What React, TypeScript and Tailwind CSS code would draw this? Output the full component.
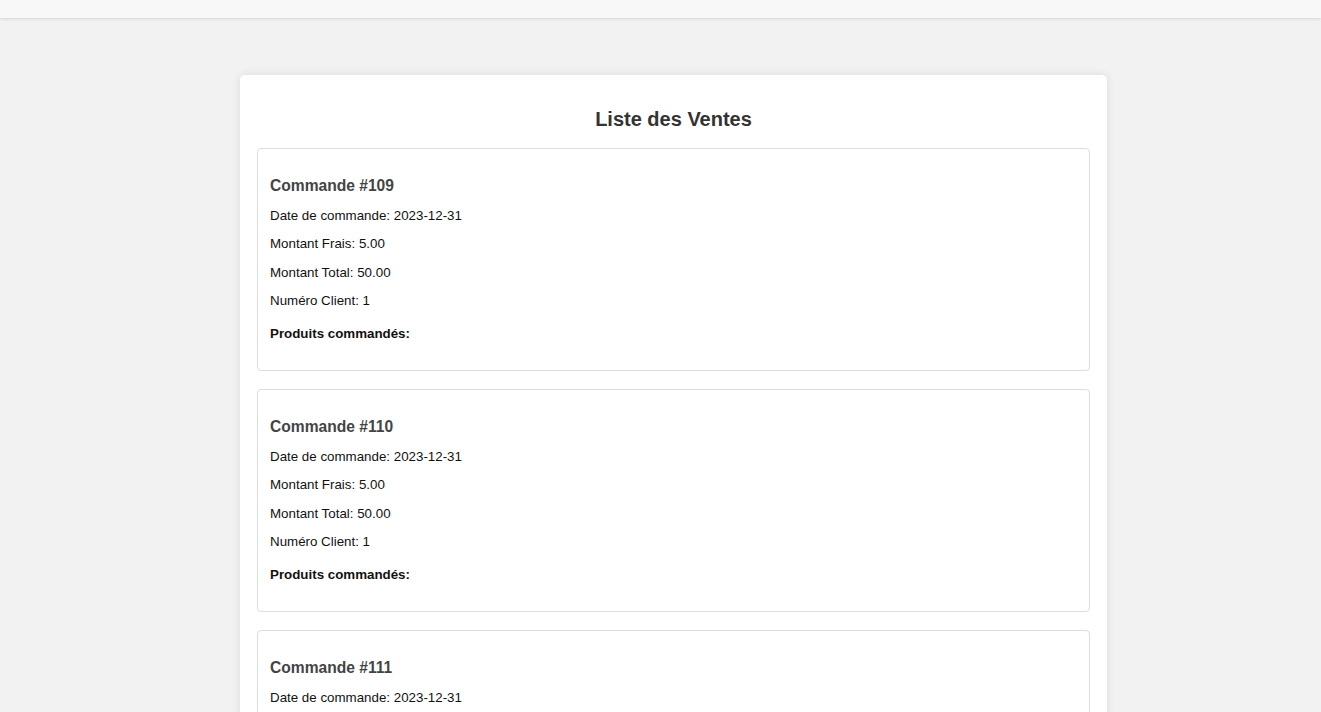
import React from "react";

const orders = [
  { id: 109, date: "2023-12-31", frais: "5.00", total: "50.00", client: "1" },
  { id: 110, date: "2023-12-31", frais: "5.00", total: "50.00", client: "1" },
  { id: 111, date: "2023-12-31", frais: "5.00", total: "50.00", client: "1" },
];

function Order({ o }: { o: (typeof orders)[number] }) {
  return (
    <div className="border border-[#dddddd] rounded-[4px] bg-white pl-[12px] pr-[12px] pt-[28px] pb-[29px] mb-[18px]">
      <h3 className="text-[15.6px] leading-[18px] font-bold text-[#444444] mb-[13px]">
        Commande #{o.id}
      </h3>
      <div className="flex flex-col gap-[13.33px] text-[13.33px] leading-[15px] text-[#111111]">
        <p>Date de commande: {o.date}</p>
        <p>Montant Frais: {o.frais}</p>
        <p>Montant Total: {o.total}</p>
        <p>Numéro Client: {o.client}</p>
      </div>
      <h4 className="mt-[18px] text-[13.33px] leading-[15px] font-bold text-[#111111]">
        Produits commandés:
      </h4>
    </div>
  );
}

export default function App() {
  return (
    <div
      className="min-h-screen bg-[#f2f2f2]"
      style={{ fontFamily: '"Liberation Sans", Arial, sans-serif' }}
    >
      <div className="h-[18px] bg-[#f8f8f8] shadow-[0_1px_3px_rgba(0,0,0,0.12)]" />
      <div className="ml-[240px] mt-[57px] w-[867px] bg-white rounded-[5px] shadow-[0_0_10px_rgba(0,0,0,0.1)] px-[17px] pt-[33px] pb-[2px]">
        <h2 className="text-center text-[20px] leading-[23px] font-bold text-[#333333] mb-[17px]">
          Liste des Ventes
        </h2>
        {orders.map((o) => (
          <Order key={o.id} o={o} />
        ))}
      </div>
    </div>
  );
}
